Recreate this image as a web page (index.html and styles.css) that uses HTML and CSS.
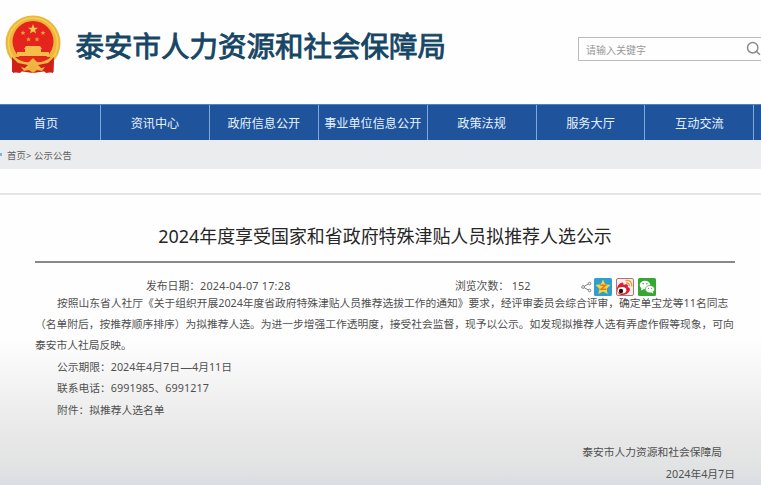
FILE: index.html
```html
<!DOCTYPE html>
<html lang="zh-CN">
<head>
<meta charset="utf-8">
<title>泰安市人力资源和社会保障局</title>
<link rel="stylesheet" href="styles.css">
</head>
<body>
<header class="header">
  <svg class="emblem" viewBox="0 0 56 60" aria-hidden="true">
    <path d="M7 41 L49 41 L48 58 L42 56 L28 58 L14 56 L8 58Z" fill="#cf2118"/>
    <ellipse cx="28" cy="28" rx="27.500" ry="27.500" fill="#edb73c"/>
    <ellipse cx="28" cy="28" rx="24.500" ry="25" fill="none" stroke="#f7ce58" stroke-width="1.500"/>
    <circle cx="28" cy="26.500" r="20.500" fill="#e5251d"/>
    <path d="M28 9 L29.300 12.700 H33 L30 15 L31.200 18.600 L28 16.400 L24.800 18.600 L26 15 L23 12.700 H26.700Z" fill="#f8c94e"/>
    <g fill="#f09a3c">
      <path id="star" d="M18 15.500 l.7 1.600h1.700l-1.300 1.100.5 1.700-1.600-1-1.600 1 .5-1.700-1.300-1.100h1.700z"/>
      <use href="#star" x="20"/><use href="#star" x="5.500" y="6.500"/><use href="#star" x="14" y="6.500"/>
    </g>
    <path d="M21 31 h14 l2 3 h-1 v3 h8 v4 H12 v-4 h8 v-3 h-1z" fill="#f5bd4a"/>
    <path d="M10 42 H46 Q38 50 28 47 Q18 50 10 42Z" fill="#e4291c"/>
    <path d="M8 41 Q17 48 24 47 L28 43 L32 47 Q39 48 48 41 L44 48 Q35 52 28 50 Q21 52 12 48Z" fill="#f0b641"/>
    <path d="M7 42 L13 48 L23 50 L19 54 L15 58 L7 57Z M49 42 L43 48 L33 50 L37 54 L41 58 L48.500 57Z" fill="#cf2118"/>
    <path d="M16 52 Q23 55 28 50 Q33 55 40 52 L37 56 L32 55 L28 58 L24 55 L19 56Z" fill="#efb041"/>
  </svg>
  <h1 class="site-name">泰安市人力资源和社会保障局</h1>
  <div class="search">
    <span>请输入关键字</span>
    <svg class="search-icon" viewBox="0 0 16 16" aria-hidden="true"><circle cx="6.700" cy="6.700" r="5.200"/><path d="M10.500 10.500 L14 13.800"/></svg>
  </div>
</header>
<nav class="nav">
  <a>首页</a><a>资讯中心</a><a>政府信息公开</a><a>事业单位信息公开</a><a>政策法规</a><a>服务大厅</a><a>互动交流</a><a></a>
</nav>
<div class="crumbs"><i class="crumb-mark"></i><span>首页&gt; 公示公告</span></div>
<div class="strip"></div>
<main class="article">
  <h2 class="title">2024年度享受国家和省政府特殊津贴人员拟推荐人选公示</h2>
  <div class="meta">
    <span class="date">发布日期：<span class="stamp">2024-04-07 17:28</span></span>
    <span class="views">浏览次数： 152</span>
    <div class="share">
      <svg class="share-node" viewBox="0 0 12 12" aria-hidden="true"><g fill="none" stroke="#777"><path d="M3.500 5.200 L8 2.700 M3.500 6.800 L8 9.300"/><circle cx="2.300" cy="6" r="1.500"/><circle cx="9.300" cy="2.200" r="1.400"/><circle cx="9.300" cy="9.800" r="1.400"/></g></svg>
      <svg class="share-btn" viewBox="0 0 18 18" aria-hidden="true"><rect width="18" height="18" rx="1.500" fill="#2d9fd3"/><path d="M9 1.500 L11.200 6.300 L16.500 7 L12.600 10.700 L13.600 16 L9 13.400 L4.400 16 L5.400 10.700 L1.500 7 L6.800 6.300Z" fill="#fbd338"/><path d="M6.300 7.300 H11.500 L7 11.200 H12" fill="none" stroke="#df7c20" stroke-width="1.500"/></svg>
      <svg class="share-btn" viewBox="0 0 18 18" aria-hidden="true"><rect x=".5" y=".5" width="17" height="17" rx="1.500" fill="#fbeeee" stroke="#ba7070"/><path d="M1 10 Q2.500 5 6.500 4.500 Q8 5 7.500 7 Q11 5.500 12 7.500 L11.700 9 Q15 10 13.500 13 Q11 17.500 5 17 Q1 16 1 10Z" fill="#d91f33"/><ellipse cx="6" cy="12.300" rx="4.300" ry="3.300" fill="#fff"/><circle cx="5" cy="13" r="2.200" fill="#171313"/><path d="M9.500 2.500 Q16 1.500 15.800 8.500 M10 5 Q13.500 4.500 13.200 8" fill="none" stroke="#ee9c35" stroke-width="1.400"/></svg>
      <svg class="share-btn" viewBox="0 0 18 18" aria-hidden="true"><rect width="18" height="18" rx="1.500" fill="#36a735"/><ellipse cx="7" cy="7" rx="5.300" ry="4.300" fill="#fff"/><path d="M3.500 9.500 L3 12.500 L6 11Z" fill="#fff"/><ellipse cx="12" cy="11.200" rx="4.600" ry="3.700" fill="#fff" stroke="#36a735" stroke-width=".7"/><path d="M13 14 L15.200 15.800 L15 13Z" fill="#fff"/><g fill="#36a735"><circle cx="5.200" cy="5.800" r=".8"/><circle cx="8.800" cy="5.800" r=".8"/><circle cx="10.500" cy="10.300" r=".6"/><circle cx="13.500" cy="10.300" r=".6"/></g></svg>
    </div>
  </div>
  <div class="body">
    <p class="indent">按照山东省人社厅《关于组织开展2024年度省政府特殊津贴人员推荐选拔工作的通知》要求，经评审委员会综合评审，确定单宝龙等11名同志<br>（名单附后，按推荐顺序排序）为拟推荐人选。为进一步增强工作透明度，接受社会监督，现予以公示。如发现拟推荐人选有弄虚作假等现象，可向<br>泰安市人社局反映。</p>
    <p class="indent">公示期限：2024年4月7日<span class="dash">—</span>4月11日</p>
    <p class="indent">联系电话：<span class="phone">6991985、6991217</span></p>
    <p class="indent">附件：拟推荐人选名单</p>
  </div>
  <footer class="sign">
    <p class="agency">泰安市人力资源和社会保障局</p>
    <p>2024年4月7日</p>
  </footer>
</main>
</body>
</html>
```
FILE: styles.css
```css
* { box-sizing: border-box; }
body {
  margin: 0;
  width: 761px;
  height: 485px;
  overflow: hidden;
  font-family: "Noto Sans", "Noto Sans CJK SC", sans-serif;
  color: #505050;
  background: linear-gradient(#fff 0, #fefefe 340px, #f4f4f4 380px, #e8e8e8 435px, #e1e2e3 470px, #dadde1 485px);
}
h1, h2, p { margin: 0; font-weight: 400; }
.header { display: flex; height: 104px; padding-left: 5px; background: #fefefe; }
.emblem { width: 56px; height: 60px; margin-top: 15px; flex: none; }
.site-name {
  margin: 25px 0 0 14.500px;
  font-size: 28.500px;
  line-height: 42px;
  font-weight: 400;
  white-space: nowrap;
  color: #164665;
  -webkit-text-stroke: 0.9px #164665;
}
.search {
  display: flex;
  align-items: center;
  justify-content: space-between;
  flex: none;
  width: 190px;
  height: 24px;
  margin: 37px 0 0 auto;
  margin-right: -7px;
  padding: 0 5px 0 7px;
  border: 1px solid #bbb;
  font-size: 10px;
  color: #999;
}
.search-icon { width: 16px; height: 16px; fill: none; stroke: #8b8b8b; stroke-width: 1.500; }
.nav {
  display: grid;
  grid-template-columns: 101px repeat(6, 108.900px) 8px;
  height: 36px;
  border-top: 1px solid #4f83c4;
  background: #1f539c;
  overflow: hidden;
}
.nav a {
  display: flex;
  justify-content: center;
  border-right: 1px solid #7fa8dc;
  font-size: 12.150px;
  line-height: 37px;
  white-space: nowrap;
  color: #e6f2ff;
}
.nav a:first-child { padding-right: 8px; }
.nav a:last-child { border: 0; }
.crumbs {
  display: flex;
  align-items: center;
  gap: 5px;
  height: 29px;
  background: #ebeced;
  font-size: 9.300px;
  letter-spacing: 0.180px;
  color: #606060;
}
.crumb-mark { width: 2px; height: 3px; background: #7bb5e5; }
.strip { height: 26px; background: #fefefe; border-bottom: 2px solid #e6e6e6; }
.article { padding: 25px 26px 0 35px; }
.title {
  height: 43px;
  border-bottom: 2px solid #888;
  font-size: 17.950px;
  line-height: 32px;
  text-align: center;
  white-space: nowrap;
  color: #262626;
}
.meta { display: flex; align-items: flex-start; height: 29px; padding: 15px 0 0 111px; font-size: 10.800px; line-height: 16px; }
.date { width: 309px; }
.stamp { letter-spacing: 0.240px; }
.views { width: 126px; }
.share { display: flex; align-items: center; gap: 4px; }
.share-node { width: 11px; height: 12px; margin-right: -2px; }
.share-btn { width: 18px; height: 18px; }
.body, .sign { font-size: 10.750px; line-height: 21.400px; white-space: nowrap; }
.body { padding-top: 0.500px; }
.indent { text-indent: 22px; }
.dash { display: inline-block; transform: scaleX(1.120); text-indent: 0; margin: 0 0.700px; }
.phone { letter-spacing: 0.100px; }
.sign { margin-top: 21.500px; text-align: right; }
.agency { padding-right: 13px; }
```
